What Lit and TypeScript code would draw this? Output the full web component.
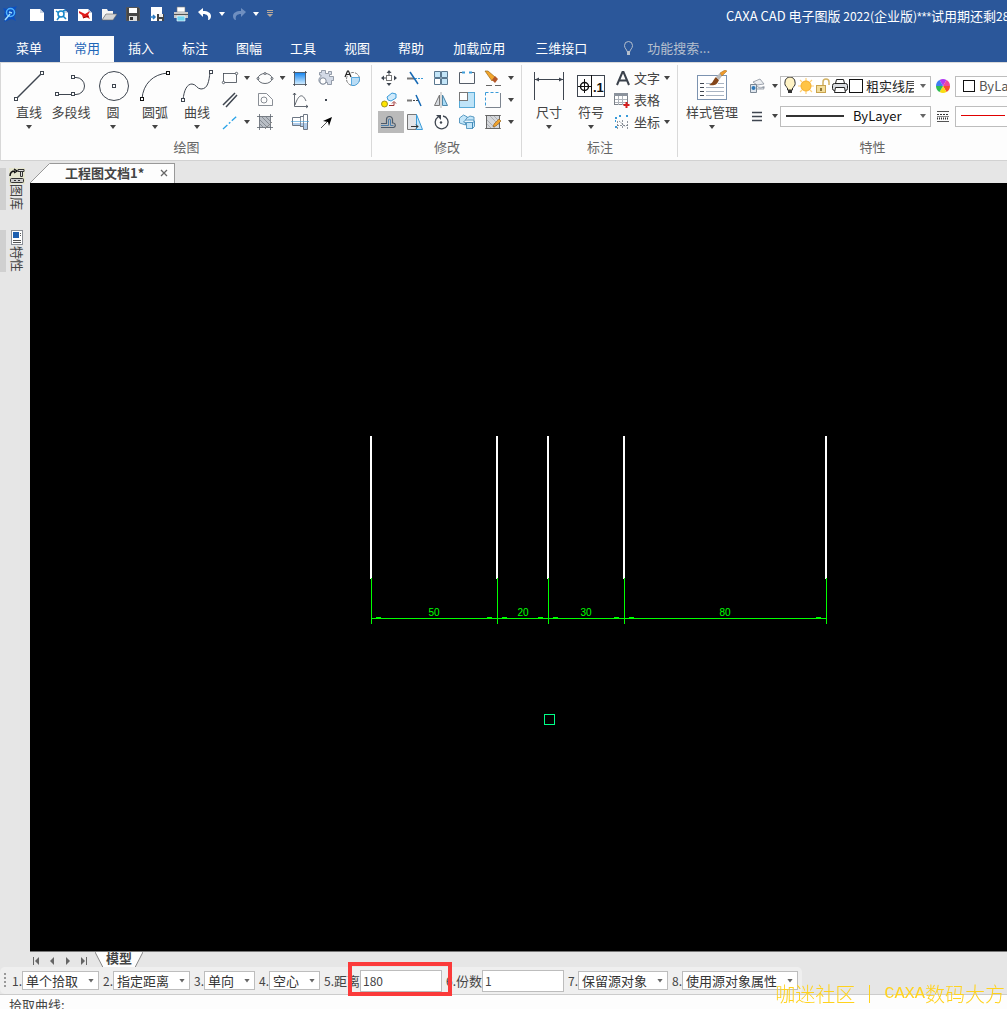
import { LitElement, html, svg, css, nothing } from "lit";
import { customElement } from "lit/decorators.js";
import { classMap } from "lit/directives/class-map.js";

const draw = (w: number, h: number, body: unknown) =>
  html`<svg class="ico" width=${w} height=${h} viewBox="0 0 ${w} ${h}" fill="none" aria-hidden="true">${body}</svg>`;

const D = "#3f4650";
const B = "#3a9bd9";
const node = (x: number, y: number, c = D) =>
  svg`<rect x=${x - 1.5} y=${y - 1.5} width="3" height="3" fill="#fff" stroke=${c}></rect>`;

/* Quick access icons, 16 x 16 */
const page = svg`<path d="M1 3h10l4 4v8H1z" fill="#fff"></path><path d="M11 3v4h4z" fill="#c9d3e3"></path>`;
const quick = {
  logo: draw(16, 18, svg`<path d="M1 3l4 1 2-2 5 0 3-1-2 4 1 4-2 3 2 4-4-2-3 1-5 2 2-4-2-3 1-3z" fill="#0b4fc0"></path><circle cx="8.500" cy="7.500" r="4" stroke="#4fb4ff" stroke-width="1.500"></circle><path d="M3 15l5-6M7 7l3 1" stroke="#9fdcff" stroke-width="1.500"></path>`),
  blank: draw(16, 16, page),
  find: draw(16, 16, svg`${page}<circle cx="8" cy="8" r="3" stroke="#1787c9" stroke-width="1.500"></circle><path d="M3 5l3 2M4 14l3-4M10 10l3 3M10 5l3-1" stroke="#1787c9" stroke-width="1.500"></path>`),
  red: draw(16, 16, svg`${page}<path d="M2 5l4 2 2 1 5-3-2 4 2 4-4-2-3 1-1-3-3-2z" fill="#e01b1b"></path><path d="M6 12l6-2" stroke="#a00000"></path>`),
  open: draw(16, 16, svg`<path d="M1 14V3h5l1 2h5v3H5z" fill="#f5f5f5"></path><path d="M1 14l4-6h11l-4 6z" fill="#d5d5d5" stroke="#666" stroke-width=".6"></path>`),
  save: draw(16, 16, svg`<path d="M1.500 1.500h12l1 1v12h-13z" fill="#474747" stroke="#555"></path><path d="M4 2h8v5H4z" fill="#fff"></path><path d="M4 10h8v5H4z" fill="#ddd"></path><path d="M5 11h3v3H5z" fill="#333"></path>`),
  saveAs: draw(16, 16, svg`<path d="M2 1h11v8H8v6H2z" fill="#fff"></path><path d="M1 11h5m-2-2l2 2-2 2" stroke="#2b7ac0" stroke-width="1.500"></path><path d="M8 8h7v7H8z" fill="#444"></path><path d="M10 8h4v3h-4zM10 13h3v2h-3z" fill="#eee"></path>`),
  print: draw(16, 16, svg`<path d="M4 1h8v5H4z" fill="#fff" stroke="#777" stroke-width=".6"></path><path d="M1 6h14v6H1z" fill="#c9c9c9"></path><path d="M1 8h14v1H1z" fill="#555"></path><path d="M4 10h8v5H4z" fill="#6fd3ef" stroke="#fff" stroke-width=".6"></path>`),
  undo: draw(16, 16, svg`<path d="M1 6l5-4v3c5 0 8 2 8 5 0 2-1 4-3 4 1-4-1-6-5-6v3z" fill="#fff"></path>`),
  redo: draw(16, 16, svg`<path d="M15 6l-5-4v3c-5 0-8 2-8 5 0 2 1 4 3 4-1-4 1-6 5-6v3z" fill="#6f8fc0"></path>`),
  custom: draw(8, 10, svg`<path d="M1 1.500h6M1 3.500h6" stroke="#b9a99a"></path><path d="M1 5h6l-3 3z" fill="#b9a99a"></path>`),
};

/* Large ribbon icons, 32 x 32 */
const large = {
  line: draw(32, 32, svg`<path d="M3 29L29 3" stroke=${D} stroke-width="1.500"></path>${node(3, 29)}${node(29, 3)}`),
  poly: draw(32, 32, svg`<path d="M2 24.500h16M18 7.500h3a8 8 0 0 1 0 17h-3" stroke=${D}></path>${node(2, 24)}${node(18, 24)}${node(18, 7)}`),
  circle: draw(32, 32, svg`<circle cx="17" cy="16" r="14.500" stroke=${D}></circle>${node(17, 16)}`),
  arc: draw(32, 32, svg`<path d="M3 29C4 14 14 4 29 3" stroke=${D}></path>${node(3, 29, "#111")}${node(29, 3, "#111")}`),
  curve: draw(32, 32, svg`<path d="M2 30c1-10 4-16 9-16 4 0 5 5 9 5 7 0 8-8 9-17" stroke=${D}></path>${node(2, 30)}${node(30, 2)}`),
  dim: draw(32, 32, svg`<path d="M1.500 2v28M30.500 2v28M2 9.500h28" stroke=${D}></path><path d="M2 9.500l4-2v4zM30 9.500l-4-2v4z" fill=${D}></path>`),
  sym: draw(32, 32, svg`<rect x="2.500" y="5.500" width="27" height="21" fill="#fff" stroke=${D}></rect><path d="M16.500 5v22M3 16.500h13M9.500 9v14" stroke="#111"></path><circle cx="9.500" cy="16.500" r="4" stroke="#111" stroke-width="1.500"></circle><text x="18" y="22" font-family="Liberation Sans, sans-serif" font-weight="700" font-size="13" fill="#111">.1</text>`),
  style: draw(32, 32, svg`<rect x="1.500" y="5.500" width="29" height="24" fill="#fff" stroke="#7c93b0"></rect><path d="M4 13.500h4M4 17.500h4M4 21.500h4M4 25.500h4" stroke=${D}></path><path d="M10 13.500h6M10 17.500h18M10 21.500h18M10 25.500h18M22 13.500h6" stroke="#a9b4c2"></path><path d="M20 7l3 3c-2 5-5 6-10 5 4-2 4-5 7-8z" fill="#84461a"></path><path d="M20 7l4-4 2 3-3 4z" fill="#bbb"></path><path d="M24 3l5-3 2 1-5 5z" fill="#f09a2a" stroke="#9c6a20" stroke-width=".5"></path>`),
};

/* Small ribbon icons, 18 x 18 */
const s = (body: unknown) => draw(18, 18, body);
const small = {
  rect: s(svg`<rect x="2.500" y="4.500" width="13" height="9" stroke=${D} stroke-width=".8"></rect><circle cx="2.500" cy="13.500" r="1.200" fill="#fff" stroke=${D} stroke-width=".8"></circle><circle cx="15.500" cy="4.500" r="1.200" fill="#fff" stroke=${D} stroke-width=".8"></circle>`),
  ellipse: s(svg`<ellipse cx="9" cy="9.500" rx="7" ry="5" stroke=${D} stroke-width=".8"></ellipse><g fill="#fff" stroke=${D} stroke-width=".8"><circle cx="2" cy="9.500" r="1"></circle><circle cx="16" cy="9.500" r="1"></circle><circle cx="9" cy="4.500" r="1"></circle></g>`),
  gradient: s(svg`<defs><linearGradient id="g" x2="0" y2="1"><stop stop-color="#1283ef"></stop><stop offset="1" stop-color="#d6efff"></stop></linearGradient></defs><rect x="3.500" y="3.500" width="11" height="12" fill="url(#g)"></rect><path d="M2 3.500h14M2 15.500h14M3.500 2v15M14.500 2v15" stroke=${D} stroke-width=".8"></path>`),
  gear: s(svg`<path d="M4.500 1.500h4v3h3v-2h3v3h-2v2h4v4h-2v4h-4v-2H9a4 4 0 1 1-5-6V6H2.500V3.500h2z" fill="#d3dae6" stroke="#7e8897" stroke-width=".8"></path><circle cx="6" cy="12" r="3.200" fill="#fff" stroke="#7e8897"></circle>`),
  region: s(svg`<circle cx="10" cy="10" r="6.500" stroke="#777" stroke-dasharray="3 1"></circle><path d="M8.500 8.500h8a7 7 0 0 1-5 8h-3z" fill="#b9dcf5" stroke=${B} stroke-width=".8"></path><path d="M2 8l2.500-6h1L8 8M3 5.500h4" stroke="#222" stroke-width="1.200"></path>`),
  parallel: s(svg`<path d="M2 14L14 2M5 16L16 4" stroke=${D} stroke-width="1.500"></path>`),
  hole: s(svg`<path d="M2.500 2.500h8l6 6v6h-14z" stroke="#6c727b" stroke-width=".8"></path><circle cx="8" cy="9" r="3" stroke="#6c727b" stroke-width=".8"></circle>`),
  graph: s(svg`<path d="M3.500 2v13.500H17M2 4l1.500-2L5 4M15 14l2 1.500-2 1.500M4 14c4-12 8-11 11-4" stroke=${D} stroke-width=".8"></path>`),
  dot: s(svg`<rect x="8" y="8" width="2" height="2" fill=${D}></rect>`),
  center: s(svg`<path d="M2 16L16 3" stroke="#29a3e8" stroke-width="1.300" stroke-dasharray="6 2 2 2"></path>`),
  hatch: s(svg`<rect x="3.500" y="3.500" width="11" height="11" fill="#b9bec5"></rect><path d="M4 7l7 7M4 11l3 3M6 4l8 8M10 4l4 4" stroke="#868c94"></path><path d="M1 3.500h16M1 14.500h16M3.500 1v16M14.500 1v16" stroke="#5d646d" stroke-width=".8"></path><path d="M9 16l7-7" stroke="#888"></path>`),
  shaft: s(svg`<path d="M1.500 4.500h8v-1h3v-2h4v15h-4v-3h-3v-1h-8z" fill="#fff" stroke="#6d7784"></path><path d="M2 10h14v6h-3v-3h-3v-1H2z" fill="#aecbea"></path><path d="M9.500 3v11M12.500 2v14" stroke="#6d7784" stroke-width=".8"></path><path d="M0 8.500h18" stroke=${B} stroke-width=".6"></path>`),
  arrow: s(svg`<path d="M4 15l7-7" stroke="#555"></path><path d="M15 4l-9 4 5 1 1 4z" fill="#000"></path>`),
  move: s(svg`<path d="M9 2v14M2 9h14" stroke=${D} stroke-dasharray="4 2"></path><path d="M9 1L6.500 4h5zM9 17l-2.500-3h5zM1 9l3-2.500v5zM17 9l-3-2.500v5z" fill=${D}></path><rect x="6.500" y="6.500" width="5" height="5" fill="#fff" stroke="#777"></rect>`),
  trim: s(svg`<path d="M1 9.500h7" stroke="#777" stroke-width="2"></path><path d="M9 9.500h8" stroke=${B} stroke-dasharray="2 1"></path><path d="M4 3l8 12" stroke="#1568b3" stroke-width="1.500"></path>`),
  array: s(svg`<g stroke="#5a7890"><path d="M2.500 2.500h6v6h-6zM9.500 2.500h6v6h-6zM9.500 9.500h6v6h-6z" fill="#c3e5f8"></path><path d="M2.500 9.500h6v6h-6z" fill="#fff"></path></g>`),
  brk: s(svg`<path d="M5 3.500H1.500v11h15v-11H13" stroke="#555d68"></path><path d="M4 3.500h3M11 3.500h3" stroke=${B} stroke-width="2"></path>`),
  erase: s(svg`<path d="M1 2l3 0 7 6-3 4z" fill="#f3a62a" stroke="#9a6a1e" stroke-width=".7"></path><path d="M8 11l3-4 3 3-3 4z" fill="#b3582a"></path><path d="M2 16.500h6M11 16.500h6" stroke="#666"></path>`),
  copy: s(svg`<circle cx="4.500" cy="13" r="3" fill="#ffe500" stroke="#8a7d10" stroke-width=".8"></circle><path d="M7 6l5-4 4 1v4l-5 3-3-1z" fill="#cfeafb" stroke=${B}></path><path d="M9 14.500h5v-3m-2 1l2-2 2 2" stroke="#9c3030"></path>`),
  extend: s(svg`<path d="M1 9.500h5" stroke="#777" stroke-width="2"></path><path d="M7 9.500h6" stroke="#444" stroke-dasharray="2 1"></path><path d="M10 4l5 11" stroke="#1568b3" stroke-width="1.500"></path>`),
  mirror: s(svg`<path d="M7.500 4v10.500h-5z" fill="#d7dbe0" stroke="#777"></path><path d="M10.500 4v10.500h5z" fill="#a9dbf7" stroke="#4d86a8"></path><path d="M9 1v16" stroke="#888" stroke-width=".6"></path>`),
  scale: s(svg`<rect x="1.500" y="1.500" width="15" height="15" fill="#bfe4f8" stroke="#57a9d6"></rect><rect x="1.500" y="1.500" width="8" height="8" fill="#fff" stroke="#777"></rect>`),
  stretchbox: s(svg`<path d="M1.500 1.500h15" stroke=${B} stroke-dasharray="3 2"></path><path d="M1.500 1.500v15" stroke=${B} stroke-dasharray="3 2"></path><path d="M16.500 2v14.500H1.500" stroke="#7c848f"></path>`),
  offset: s(svg`<path d="M1 10.500h5.500V6.500a3 3 0 0 1 6 0v3.500h1a2.300 2.300 0 0 1 0 4.500H1" stroke="#4d5a68" stroke-width="1.200"></path><path d="M1 12.500h7.500V7a1 1 0 0 1 2 0v5.500h3" stroke="#2f6fa8" stroke-width=".8"></path>`),
  stretch: s(svg`<path d="M1.500 1.500h9v15h-9z" fill="#e3e5e8" stroke="#777"></path><path d="M10.500 1.500l6 15h-6z" fill="#c4e6f9" stroke=${B}></path><path d="M5 13.500h7m-2-2l2 2-2 2" stroke="#333"></path>`),
  rotate: s(svg`<path d="M6 4a6.500 6.500 0 1 0 5-1" stroke=${D} stroke-width="1.300"></path><path d="M4 2h5v5z" fill=${D}></path><circle cx="9" cy="9.500" r="1.200" fill=${D}></circle>`),
  block: s(svg`<g stroke="#3b86b5" stroke-width=".8" fill="#c4e6f9"><path d="M1.500 5l4-3 4 2-2 3v5l-6-2z"></path><path d="M9 5l3-2 4 1v7l-2 2"></path><path d="M5.500 9l2-2h8l1 2-2 1h-6z" fill="#e7f5fd"></path><path d="M8.500 9.500h6v6h-6zM14.500 9.500l2-1v5l-2 2z"></path></g>`),
  edithatch: s(svg`<rect x="2.500" y="2.500" width="13" height="13" fill="#d5d7da" stroke="#666"></rect><path d="M3 7l8 8M3 11l4 4M6 3l9 9M10 3l5 5" stroke="#a0a5ab" stroke-width=".8"></path><path d="M1 2.500h16M1 15.500h16" stroke="#666" stroke-width=".8"></path><path d="M9 14l1-3 5-5 2 2-5 5z" fill="#f0a22c" stroke="#8b5b16" stroke-width=".6"></path>`),
  letter: s(svg`<path d="M4 16L9.500 3h1L16 16M6.500 11.500h7" stroke="#3b424c" stroke-width="2"></path>`),
  table: s(svg`<rect x="1.500" y="2.500" width="13" height="11" fill="#fff" stroke="#7b8189"></rect><path d="M1 2h14v3H1z" fill="#8b929c"></path><path d="M2 8.500h12M2 11.500h12M5.500 5v9M9.500 5v9" stroke="#aeb3ba"></path><path d="M13.500 11v6M10.500 14h6" stroke="#d61f1f" stroke-width="2"></path>`),
  coord: s(svg`<path d="M4.500 8v8.500M4 12.500h11M9.500 7v9M6 8l7 6M14.500 8v8" stroke="#747b85" stroke-width=".8" stroke-dasharray="2 1"></path><path d="M2 5h2M2 14h2M6 3h2M13 3h2M2 8h1" stroke=${B} stroke-width="2"></path>`),
  layers: s(svg`<path d="M5 5l7-3 4 5-7 1zM6 8l6 3 5-1M8 12h8l-1-3" stroke="#8a929d" fill="#eceef1" stroke-width=".8"></path><path d="M2.500 7.500h6v8h-6z" fill="#dfe6ee" stroke="#7b8794"></path><circle cx="5.500" cy="11" r="2" fill="#2e78b8"></circle>`),
  bars: s(svg`<path d="M4 5.500h10M4 9.500h10M4 13.500h10" stroke=${D} stroke-width="1.300"></path>`),
  wheel: s(svg`<g><path d="M9 9L5.500 3a7 7 0 0 1 7 0z" fill="#b23af0"></path><path d="M9 9l3.500-6A7 7 0 0 1 16 9z" fill="#f0469a"></path><path d="M9 9h7a7 7 0 0 1-3.500 6z" fill="#f5502c"></path><path d="M9 9l3.500 6a7 7 0 0 1-7 0z" fill="#f8dc12"></path><path d="M9 9l-3.500 6A7 7 0 0 1 2 9z" fill="#2fbd52"></path><path d="M9 9H2a7 7 0 0 1 3.500-6z" fill="#3f7df2"></path></g>`),
  weights: s(svg`<path d="M3 4.500h12M3 14.500h12" stroke="#555"></path><path d="M3 7.500h12" stroke="#333" stroke-dasharray="2 1"></path><path d="M3 9.500h12" stroke="#888"></path><path d="M3 11.500h12" stroke="#333" stroke-width="2" stroke-dasharray="1 1"></path>`),
};

const bulb = draw(14, 18, svg`<path d="M4.500 13v-2C2 9 1.500 7 2 5a5 5 0 0 1 10 0c.5 2 0 4-2.500 6v2z" fill="#fff3c4" stroke="#333"></path><path d="M5 13h4v3H5z" fill="#333"></path>`);
const sun = draw(16, 18, svg`<path d="M8 1v16M0 9h16M2 3l12 12M14 3L2 15" stroke="#ffd27a" stroke-width="1.200"></path><circle cx="8" cy="9" r="5" fill="#ffc445" stroke="#f5ae2c"></circle>`);
const lock = draw(16, 18, svg`<path d="M8 8V5a3 3 0 0 1 6 0v3" stroke="#d2b263" stroke-width="1.500"></path><rect x="1.500" y="8.500" width="9" height="7" fill="#f3dd9a" stroke="#c8a24d"></rect><path d="M6 11v3" stroke="#6b5216" stroke-width="1.500"></path>`);
const printer = draw(16, 18, svg`<path d="M4.500 2.500h7l1 4h-9z" fill="#fff" stroke="#222"></path><rect x=".5" y="6.500" width="15" height="7" rx="2" fill="#d9dce0" stroke="#222"></rect><path d="M3.500 10.500h9l1 5h-11z" fill="#fff" stroke="#222"></path>`);
const swatch = (n: number) => draw(n, n, svg`<rect x=".5" y=".5" width=${n - 1} height=${n - 1} fill="#fff" stroke="#111"></rect>`);

type Big = [keyof typeof large, string, boolean];
const bigDraw: Big[] = [
  ["line", "直线", true], ["poly", "多段线", false], ["circle", "圆", true], ["arc", "圆弧", true], ["curve", "曲线", true],
];
const bigNote: Big[] = [["dim", "尺寸", true], ["sym", "符号", true]];

type Small = [keyof typeof small, string, boolean?] | null;
const drawTools: Small[] = [
  ["rect", "矩形", true], ["ellipse", "椭圆", true], ["gradient", "填充"], ["gear", "图库"], ["region", "局部放大"],
  ["parallel", "平行线"], ["hole", "孔"], ["graph", "公式曲线"], ["dot", "点"], null,
  ["center", "中心线", true], ["hatch", "剖面线"], ["shaft", "轴"], ["arrow", "箭头"], null,
];
const editTools: [keyof typeof small, string][] = [
  ["move", "平移"], ["trim", "裁剪"], ["array", "阵列"], ["brk", "打断"], ["erase", "删除"],
  ["copy", "复制"], ["extend", "延伸"], ["mirror", "镜像"], ["scale", "缩放"], ["stretchbox", "拉伸"],
  ["offset", "等距线"], ["stretch", "拉伸边"], ["rotate", "旋转"], ["block", "块"], ["edithatch", "编辑填充"],
];
const tabs = ["常用", "插入", "标注", "图幅", "工具", "视图", "帮助", "加载应用", "三维接口"];

const caret = html`<i class="caret"></i>`;

@customElement("app-root")
export class AppRoot extends LitElement {
  static styles = css`
    :host { display: flex; flex-direction: column; height: 100vh; overflow: hidden; background: #e6e6e6; color: #444; font: 13px/18px "Noto Sans CJK SC", "Open Sans", sans-serif; }
    * { box-sizing: border-box; }
    button, select, input { font: inherit; color: inherit; margin: 0; padding: 0; border: 0; background: none; border-radius: 0; }
    button { display: flex; align-items: center; justify-content: center; white-space: nowrap; }
    .ico { display: block; flex: none; }
    .caret { width: 6px; height: 4px; flex: none; background: currentColor; clip-path: polygon(0 0, 100% 0, 50% 100%); }

    .title { display: flex; align-items: center; flex: none; height: 36px; padding-bottom: 8px; background: #2b579a; color: #fff; white-space: nowrap; }
    .title .logo { flex: none; width: 25px; padding-left: 2px; }
    .title button { width: 24px; height: 24px; flex: none; }
    .title button.drop { width: 10px; }
    .title button.custom { margin-left: 4px; }
    .title .app { margin: 0 0 0 451px; padding-top: 4px; flex: none; font-size: 13px; font-weight: 400; }
    .title .num { font-size: 12px; }
    .title .stars { font-family: "Liberation Sans", sans-serif; font-size: 12px; }

    .tabs { display: flex; flex: none; height: 26px; padding-left: 2px; background: #2b579a; color: #fff; white-space: nowrap; }
    .tabs button { padding: 0 14px 2px; }
    .tabs .menu { margin-right: 4px; }
    .tabs .on { background: #fdfdfd; color: #1e66b8; }
    .tabs .wide { padding: 0 15px 2px; }
    .search { display: flex; align-items: center; gap: 11px; margin-left: 20px; padding-bottom: 2px; color: #b5bfcd; }
    .search input { width: 120px; }
    .search input::placeholder { color: #b5bfcd; opacity: 1; }

    .ribbon { display: flex; flex: none; overflow: hidden; border-top: 1px solid #dadada; border-bottom: 1px solid #d2d2d2; border-left: 1px solid #d8d8d8; background: #fdfdfd; }
    .group { position: relative; flex: none; padding: 4px 6px 0; }
    .group.roomy { padding: 4px 7px 0; }
    .group::after { content: ""; position: absolute; right: 0; top: 2px; bottom: 3px; width: 1px; background: #d9d9d9; }
    .group h2 { margin: 0; height: 27px; font-size: 13px; line-height: 27px; font-weight: 400; text-align: center; color: #666; }
    .body { display: flex; height: 66px; }
    .big { flex-direction: column; justify-content: flex-start; width: 42px; height: 66px; padding-top: 3px; }
    .big span { height: 20px; line-height: 20px; }
    .big .caret { margin-top: 3px; }
    .big.style { width: 56px; }
    .cells { display: grid; grid-auto-rows: 22px; align-items: stretch; }
    .cells button { min-width: 0; }
    .cells.drawing { grid-template-columns: 24px 10px 26px 9px 26px 26px 26px; }
    .cells.editing { grid-template-columns: repeat(5, 26px) 6px; padding-right: 2px; }
    .cells.editing .ico { margin-right: 4px; }
    .cells .sel { background: #bababa; }
    .notes { display: grid; grid-auto-rows: 22px; padding: 0 2px 0 1px; }
    .notes button { justify-content: flex-start; gap: 3px; }
    .notes .caret { margin-left: 1px; }
    .props { display: grid; grid-template-columns: 26px 10px 151px 24px 106px; grid-auto-rows: 30px; padding: 4px 0 0 4px; }
    .props > button { align-self: center; height: 24px; }
    .combo { position: relative; display: flex; align-items: center; align-self: center; height: 21px; border: 1px solid #bdbdbd; background: #fff; color: #555; overflow: hidden; }
    .combo select { appearance: none; flex: 1; min-width: 0; align-self: stretch; outline: 0; padding-right: 14px; }
    .combo .caret { position: absolute; right: 4px; top: 50%; margin-top: -2px; color: #666; pointer-events: none; }
    .layer { padding-left: 2px; gap: 1px; color: #222; }
    .layer select { padding-left: 2px; margin-right: 16px; padding-right: 0; overflow: hidden; }
    .style-line { padding-left: 5px; gap: 9px; color: #111; }
    .colour { padding-left: 7px; gap: 4px; }

    .work { display: flex; flex: 1; min-height: 0; }
    .side { flex: none; width: 30px; padding-top: 7px; display: flex; flex-direction: column; gap: 20px; }
    .side button { flex-direction: column; justify-content: flex-start; width: 30px; padding-left: 4px; line-height: 14px; position: relative; }
    .side button::before { content: ""; position: absolute; left: 0; top: 0; bottom: 0; width: 6px; background: #d0d0d0; }
    .side span { writing-mode: vertical-rl; text-orientation: sideways; width: 14px; }
    .main { flex: 1; min-width: 0; display: flex; flex-direction: column; }
    .docs { display: flex; flex: none; height: 22px; padding-top: 2px; }
    .doc { display: flex; align-items: center; gap: 16px; height: 20px; padding: 0 6px 2px 15px; background: #fdfdfd; border-top: 1px solid #999; border-right: 1px solid #999; font-weight: 700; }
    .canvas { flex: 1; min-height: 0; background: #000; }
    .canvas svg { display: block; width: 100%; height: 100%; }
    .sheets { display: flex; flex: none; height: 16px; border-top: 1px solid #777; }
    .sheets .nav { width: 16px; height: 16px; padding-top: 2px; }
    .sheets .first { margin-left: -2px; }
    .sheets .nav:nth-of-type(4) { margin-right: 3px; }
    .model { position: relative; width: 48px; height: 16px; font-weight: 700; }
    .model svg { position: absolute; inset: 0; }
    .model span { position: relative; height: 18px; line-height: 14px; }

    .options { flex: none; display: flex; height: 28px; border-bottom: 1px solid #ccc; }
    .bar { position: relative; display: flex; align-items: center; height: 27px; padding: 0 0 0 4px; background: #efefef; border-radius: 5px; white-space: nowrap; }
    .grip { flex: none; width: 2px; height: 15px; margin-right: 6px; background: repeating-linear-gradient(#999 0 2px, transparent 2px 4px); }
    .field { display: flex; align-items: center; margin-right: 4px; }
    .no { width: 10px; font-size: 12px; }
    .field .combo { height: 19px; color: #333; }
    .field .combo select { padding-left: 3px; }
    .w77 { width: 77px; } .w51 { width: 51px; } .w90 { width: 90px; } .w116 { width: 116px; }
    .name { width: 26px; }
    .field input { width: 82px; height: 22px; border: 1px solid #bdbdbd; background: #fff; padding-left: 2px; outline: 0; font-size: 12px; }
    .mark { position: absolute; left: 348px; top: -5px; width: 104px; height: 34px; border: 4px solid #fb3a3a; pointer-events: none; z-index: 2; }
    .command { flex: none; height: 14px; padding: 1px 9px 0; background: #fdfdfd; overflow: hidden; }
    .credit { position: fixed; right: 2px; bottom: 4px; margin: 0; display: flex; align-items: center; font-size: 20px; line-height: 22px; font-weight: 300; color: #ffd21c; white-space: nowrap; pointer-events: none; }
    .credit .rule { width: 1px; height: 18px; margin: 0 14px; background: currentColor; }
    .credit .latin { font: 17px/22px "Liberation Mono", monospace; }
  `;

  private big([icon, label, drop]: Big, cls = "") {
    return html`<button class="big ${cls}">${large[icon]}<span>${label}</span>${drop ? caret : nothing}</button>`;
  }

  private drawCell(t: Small, i: number) {
    if (!t) return html`<span></span>`;
    const cell = html`<button aria-label=${t[1]}>${small[t[0]]}</button>`;
    if (i % 5 > 1) return cell;
    return html`${cell}${t[2] ? html`<button aria-label="${t[1]}选项">${caret}</button>` : html`<span></span>`}`;
  }

  private pick(no: string, label: string, value: string, width: string) {
    return html`<label class="field"><span class="no">${no}</span><span class="combo ${width}"><select aria-label=${label}><option>${value}</option></select>${caret}</span></label>`;
  }

  private entry(no: string, label: string, value: string) {
    return html`<label class="field"><span class="no">${no}</span><span class="name">${label}</span><input .value=${value} /></label>`;
  }

  private quickBtn(name: keyof typeof quick, label: string) {
    return html`<button aria-label=${label}>${quick[name]}</button>`;
  }

  private drawing() {
    const xs = [341, 467, 518, 594, 796];
    const dims = ["50", "20", "30", "80"];
    return html`<svg role="img" aria-label="工程图" shape-rendering="crispEdges">
      ${xs.map((x) => svg`<rect x=${x - 1} y="253" width="2" height="143" fill="#fff"></rect><rect x=${x} y="395" width="1" height="46" fill="#0f0"></rect>`)}
      <rect x="341" y="435" width="456" height="1" fill="#0f0"></rect>
      ${dims.map((d, i) => svg`
        <rect x=${xs[i] + 5} y="434" width="5" height="1" fill="#0f0"></rect>
        <rect x=${xs[i + 1] - 10} y="434" width="5" height="1" fill="#0f0"></rect>
        <text x=${Math.round((xs[i] + xs[i + 1]) / 2)} y="433" text-anchor="middle" font-family="Liberation Sans Narrow, Liberation Sans, sans-serif" font-size="10" fill="#0f0">${d}</text>`)}
      <rect x="514.500" y="531.500" width="10" height="10" fill="none" stroke="#00ff88"></rect>
    </svg>`;
  }

  render() {
    return html`
      <header class="title">
        <span class="logo">${quick.logo}</span>
        ${this.quickBtn("blank", "新建")}${this.quickBtn("find", "图纸")}${this.quickBtn("red", "转换")}${this.quickBtn("open", "打开")}
        ${this.quickBtn("save", "保存")}${this.quickBtn("saveAs", "另存为")}${this.quickBtn("print", "打印")}${this.quickBtn("undo", "撤销")}
        <button class="drop" aria-label="撤销列表">${caret}</button>
        ${this.quickBtn("redo", "恢复")}
        <button class="drop" aria-label="恢复列表">${caret}</button>
        <button class="drop custom" aria-label="自定义">${quick.custom}</button>
        <h1 class="app">CAXA CAD 电子图版<span class="num"> 2022(</span>企业版<span class="num">)</span><span class="stars">***</span>试用期还剩<span class="num">28</span>天</h1>
      </header>
      <nav class="tabs">
        <button class="menu">菜单</button>
        ${tabs.map((t, i) => html`<button class=${classMap({ on: i === 0, wide: t.length > 2 })}>${t}</button>`)}
        <label class="search">${draw(14, 16, svg`<path d="M5 11.500c0-2-2.500-3-2.500-6a4 4 0 0 1 8 0c0 3-2.500 4-2.500 6z" stroke="#b5bfcd"></path><path d="M5 12h3v3H5z" fill="#b5bfcd"></path>`)}<input aria-label="功能搜索" placeholder="功能搜索..." /></label>
      </nav>
      <section class="ribbon">
        <div class="group roomy">
          <div class="body">
            ${bigDraw.map((b) => this.big(b))}
            <div class="cells drawing">${drawTools.map((t, i) => this.drawCell(t, i))}</div>
          </div>
          <h2>绘图</h2>
        </div>
        <div class="group">
          <div class="body">
            <div class="cells editing">
              ${editTools.map(([icon, label], i) => html`
                <button class=${classMap({ sel: icon === "offset" })} aria-label=${label}>${small[icon]}</button>
                ${i % 5 === 4 ? html`<button aria-label="${label}选项">${caret}</button>` : nothing}`)}
            </div>
          </div>
          <h2>修改</h2>
        </div>
        <div class="group">
          <div class="body">
            ${bigNote.map((b) => this.big(b))}
            <div class="notes">
              <button>${small.letter}<span>文字</span>${caret}</button>
              <button>${small.table}<span>表格</span></button>
              <button>${small.coord}<span>坐标</span>${caret}</button>
            </div>
          </div>
          <h2>标注</h2>
        </div>
        <div class="group">
          <div class="body">
            ${this.big(["style", "样式管理", true], "style")}
            <div class="props">
              <button aria-label="图层">${small.layers}</button>
              <button aria-label="图层选项">${caret}</button>
              <span class="combo layer">${bulb}${sun}${lock}${printer}${swatch(14)}<select aria-label="当前图层"><option>粗实线层</option></select>${caret}</span>
              <button aria-label="颜色">${small.wheel}</button>
              <span class="combo colour">${swatch(12)}<select aria-label="当前颜色"><option>ByLayer</option></select>${caret}</span>
              <button aria-label="线型">${small.bars}</button>
              <button aria-label="线型选项">${caret}</button>
              <span class="combo style-line">${draw(58, 4, svg`<path d="M0 2h58" stroke="#333" stroke-width="2"></path>`)}<select aria-label="当前线型"><option>ByLayer</option></select>${caret}</span>
              <button aria-label="线宽">${small.weights}</button>
              <span class="combo style-line">${draw(44, 4, svg`<path d="M0 1.500h44" stroke="#e00000"></path>`)}<select aria-label="当前线宽"><option>ByLayer</option></select>${caret}</span>
            </div>
          </div>
          <h2>特性</h2>
        </div>
      </section>
      <div class="work">
        <aside class="side">
          <button>${draw(16, 16, svg`<rect width="16" height="16" fill="#e6e6cf"></rect><path d="M1 8c0-4 2-5 5-5M5 1l3 2-3 2" stroke="#111" stroke-width="1.500"></path><path d="M9 1.500h6v2H9zM11.500 3.500h2v5h-2z" fill="#ddd" stroke="#333"></path><rect x="1.500" y="10.500" width="13" height="4" rx="1" fill="#ccc" stroke="#333"></rect><path d="M5 12.500h2M9 12.500h2" stroke="#333"></path>`)}<span>图库</span></button>
          <button>${draw(16, 16, svg`<rect x="2.500" y=".5" width="11" height="14" fill="#fff" stroke="#8a8f96"></rect><rect x="4" y="2" width="6" height="6" fill="#1d5fb0"></rect><path d="M11 3.500h1M11 5.500h1M4 10.500h8M4 12.500h8" stroke="#555"></path>`)}<span>特性</span></button>
        </aside>
        <main class="main">
          <div class="docs">
            ${draw(20, 20, svg`<path d="M0 20L19.500.5H20V20z" fill="#fdfdfd"></path><path d="M0 20L19.500.5H20" stroke="#999"></path>`)}
            <div class="doc"><span>工程图文档1*</span><button aria-label="关闭">${draw(8, 8, svg`<path d="M1 1l6 6M7 1L1 7" stroke="#666" stroke-width="1.300"></path>`)}</button></div>
          </div>
          <div class="canvas">${this.drawing()}</div>
          <div class="sheets">
            <button class="nav first" aria-label="第一页">${draw(8, 8, svg`<path d="M1.500 0v8" stroke="#666"></path><path d="M7 0v8L3 4z" fill="#666"></path>`)}</button>
            <button class="nav" aria-label="上一页">${draw(8, 8, svg`<path d="M6 0v8L2 4z" fill="#666"></path>`)}</button>
            <button class="nav" aria-label="下一页">${draw(8, 8, svg`<path d="M2 0v8l4-4z" fill="#666"></path>`)}</button>
            <button class="nav" aria-label="最后一页">${draw(8, 8, svg`<path d="M1 0v8l4-4z" fill="#666"></path><path d="M6.500 0v8" stroke="#666"></path>`)}</button>
            <button class="model">${draw(48, 16, svg`<path d="M0 0l8 15.500h32L48 0z" fill="#fdfdfd"></path><path d="M0 0l8 15.500h32L48 0" stroke="#888"></path>`)}<span>模型</span></button>
          </div>
        </main>
      </div>
      <section class="options">
        <div class="bar">
          <i class="grip"></i>
          ${this.pick("1.", "拾取方式", "单个拾取", "w77")}
          ${this.pick("2.", "距离方式", "指定距离", "w77")}
          ${this.pick("3.", "方向", "单向", "w51")}
          ${this.pick("4.", "填充", "空心", "w51")}
          ${this.entry("5.", "距离", "180")}
          ${this.entry("6.", "份数", "1")}
          ${this.pick("7.", "源对象", "保留源对象", "w90")}
          ${this.pick("8.", "属性", "使用源对象属性", "w116")}
          <div class="mark"></div>
        </div>
      </section>
      <footer class="command">拾取曲线:</footer>
      <p class="credit"><span>咖迷社区</span><i class="rule"></i><span class="latin">CAXA</span><span>数码大方</span></p>
    `;
  }
}
